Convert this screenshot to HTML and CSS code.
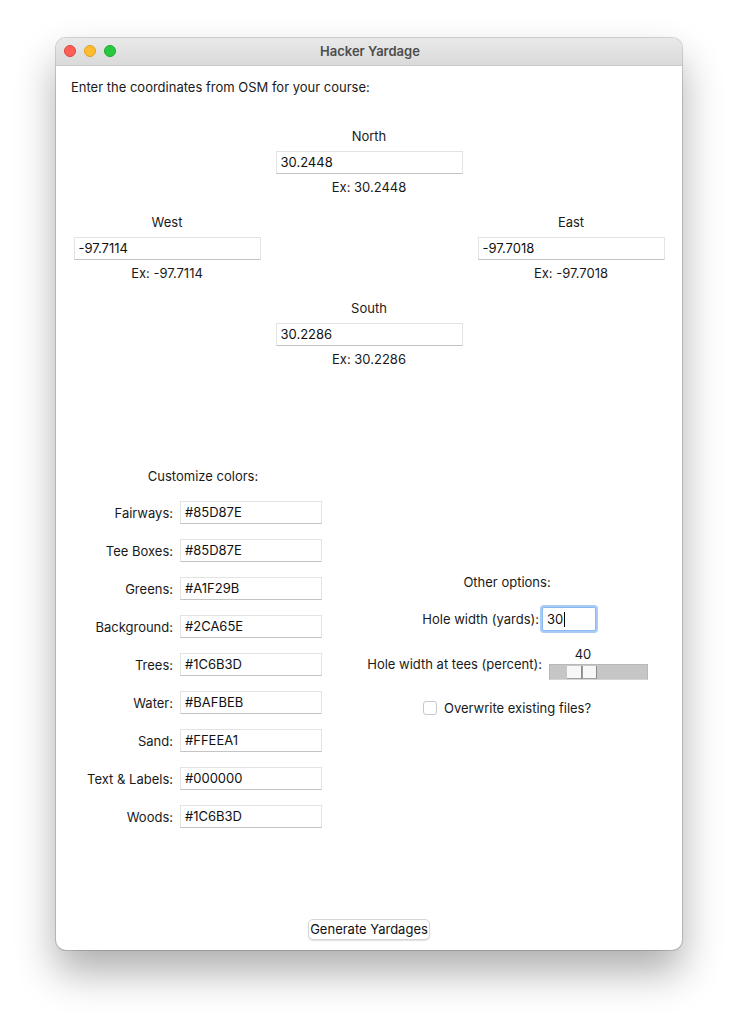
FILE: index.html
```html
<!DOCTYPE html>
<html>
<head>
<meta charset="utf-8">
<link rel="stylesheet" href="styles.css">
</head>
<body>
<div class="window">
  <div class="titlebar">
    <div class="lights">
      <span class="light red"></span>
      <span class="light yellow"></span>
      <span class="light green"></span>
    </div>
    <div class="title">Hacker Yardage</div>
  </div>
  <div class="content">
    <div class="intro">Enter the coordinates from OSM for your course:</div>
    <div class="coords">
      <div class="coord north">
        <div class="lbl">North</div>
        <div class="field wide">30.2448</div>
        <div class="lbl ex">Ex: 30.2448</div>
      </div>
      <div class="coord west">
        <div class="lbl">West</div>
        <div class="field wide">-97.7114</div>
        <div class="lbl ex">Ex: -97.7114</div>
      </div>
      <div class="coord east">
        <div class="lbl">East</div>
        <div class="field wide">-97.7018</div>
        <div class="lbl ex">Ex: -97.7018</div>
      </div>
      <div class="coord south">
        <div class="lbl">South</div>
        <div class="field wide">30.2286</div>
        <div class="lbl ex">Ex: 30.2286</div>
      </div>
    </div>
    <div class="lower">
      <div class="colors">
        <div class="head">Customize colors:</div>
        <div class="rlbl">Fairways:</div><div class="field color">#85D87E</div>
        <div class="rlbl">Tee Boxes:</div><div class="field color">#85D87E</div>
        <div class="rlbl">Greens:</div><div class="field color">#A1F29B</div>
        <div class="rlbl">Background:</div><div class="field color">#2CA65E</div>
        <div class="rlbl">Trees:</div><div class="field color">#1C6B3D</div>
        <div class="rlbl">Water:</div><div class="field color">#BAFBEB</div>
        <div class="rlbl">Sand:</div><div class="field color">#FFEEA1</div>
        <div class="rlbl">Text &amp; Labels:</div><div class="field color">#000000</div>
        <div class="rlbl">Woods:</div><div class="field color">#1C6B3D</div>
      </div>
      <div class="options">
        <div class="head">Other options:</div>
        <div class="rlbl r1">Hole width (yards):</div>
        <div class="focuscell"><div class="field focus">30<span class="caret"></span></div></div>
        <div class="rlbl mid">Hole width at tees (percent):</div>
        <div class="scalecell">
          <div class="scaleval">40</div>
          <div class="trough"><div class="thumb"><span></span><span></span></div></div>
        </div>
        <label class="check"><span class="box"></span>Overwrite existing files?</label>
      </div>
    </div>
    <div class="btnrow"><button class="btn">Generate Yardages</button></div>
  </div>
</div>
</body>
</html>
```

FILE: styles.css
```css
html, body {
  margin: 0;
  padding: 0;
  background: #ffffff;
}
html { height: 100%; }
body {
  font-family: Inter, "Liberation Sans", Arial, sans-serif;
  font-size: 13px;
  color: #1a1a1a;
  padding: 38px 0 0 56px;
  box-sizing: border-box;
  min-height: 1024px;
}
.window {
  width: 626px;
  height: 912px;
  border-radius: 10px;
  background: #ffffff;
  box-shadow: 0 0 0 1px rgba(0,0,0,0.16), 0 22px 40px rgba(0,0,0,0.32);
  overflow: hidden;
  display: flex;
  flex-direction: column;
}
.titlebar {
  height: 27px;
  border-bottom: 1px solid #c9c9c9;
  background: linear-gradient(#e9e9e9, #dadada);
  position: relative;
  display: flex;
  align-items: center;
  justify-content: center;
}
.lights {
  position: absolute;
  left: 8px;
  top: 7px;
  display: flex;
  gap: 8px;
}
.light {
  width: 12px;
  height: 12px;
  border-radius: 50%;
  box-sizing: border-box;
}
.red { background: #fe5f57; border: 0.5px solid #e0443e; }
.yellow { background: #febc2e; border: 0.5px solid #dea123; }
.green { background: #28c840; border: 0.5px solid #1aab29; }
.title {
  font-weight: 600;
  color: #4d4d4d;
  font-size: 13px;
  padding-left: 2px;
  margin-top: -1px;
}
.content {
  flex: 1;
  display: flex;
  flex-direction: column;
  padding: 13px 0 10px 0;
}
.intro {
  line-height: 16px;
  padding-left: 15px;
}
.lbl {
  line-height: 16px;
  text-align: center;
}
.coords {
  display: grid;
  grid-template-columns: repeat(3, 202px);
  grid-template-rows: repeat(3, 67px);
  row-gap: 19px;
  padding: 0 10px;
  margin-top: 33px;
}
.coord {
  display: flex;
  flex-direction: column;
  align-items: center;
}
.north { grid-column: 2; grid-row: 1; }
.west { grid-column: 1; grid-row: 2; }
.east { grid-column: 3; grid-row: 2; }
.south { grid-column: 2; grid-row: 3; }
.field {
  box-sizing: border-box;
  height: 23px;
  border: 1px solid #e3e3e3;
  border-bottom-color: #c4c4c4;
  background: #fff;
  line-height: 21px;
  padding-left: 4px;
  color: #111;
}
.wide {
  width: 187px;
  margin: 7px 0 5px;
}
.lower {
  margin-top: 101px;
  display: flex;
  align-items: center;
}
.colors {
  margin-left: 28px;
  display: grid;
  grid-template-columns: 89px 142px;
  column-gap: 7px;
  row-gap: 15px;
  align-items: center;
}
.head {
  grid-column: 1 / -1;
  text-align: center;
  line-height: 16px;
  margin-bottom: 2px;
}
.rlbl {
  text-align: right;
  line-height: 16px;
  white-space: nowrap;
}
.color {
  width: 142px;
}
.options {
  margin-left: 44px;
  width: 282px;
  display: grid;
  grid-template-columns: 176px 106px;
  row-gap: 15px;
  align-items: center;
  margin-top: -7px;
}
.r1 { padding-right: 3px; }
.focus {
  width: 54px;
  height: 24px;
  border: 1px solid #8ab8f0;
  box-shadow: 0 0 0 2px #a9cbf5;
  border-radius: 2px;
  line-height: 22px;
  padding-left: 4px;
}
.caret {
  display: inline-block;
  width: 1px;
  height: 15px;
  background: #000;
  vertical-align: -3px;
  margin-left: 1px;
}
.mid { margin-top: 2px; }
.scalecell {
  padding-left: 7px;
}
.scaleval {
  width: 68px;
  text-align: center;
  line-height: 16px;
  margin-bottom: 2px;
}
.trough {
  width: 99px;
  height: 16px;
  box-sizing: border-box;
  background: #c6c6c6;
  border: 1px solid #b8b8b8;
  border-bottom-color: #d4d4d4;
  position: relative;
}
.thumb {
  position: absolute;
  left: 17px;
  top: 1px;
  width: 30px;
  height: 13px;
  display: flex;
  gap: 1px;
  background: #9a9a9a;
}
.thumb span {
  flex: 1;
  background: #f7f7f7;
  border-right: 1px solid #8a8a8a;
  border-bottom: 1px solid #a0a0a0;
}
.check {
  grid-column: 1 / -1;
  display: flex;
  align-items: center;
  gap: 7px;
  margin-top: 5px;
  padding-left: 57px;
  line-height: 16px;
}
.box {
  width: 14px;
  height: 14px;
  box-sizing: border-box;
  border: 1px solid #c8c8c8;
  border-radius: 3px;
  background: #fff;
}
.btnrow {
  margin-top: auto;
  display: flex;
  justify-content: center;
}
.btn {
  font-family: Inter, "Liberation Sans", Arial, sans-serif;
  font-size: 13px;
  color: #111;
  height: 21px;
  padding: 0;
  white-space: nowrap;
  background: #fff;
  border: 1px solid #d6d6d6;
  border-radius: 5px;
  box-shadow: 0 1px 1px rgba(0,0,0,0.12);
  line-height: 19px;
  width: 122px;
}
```
